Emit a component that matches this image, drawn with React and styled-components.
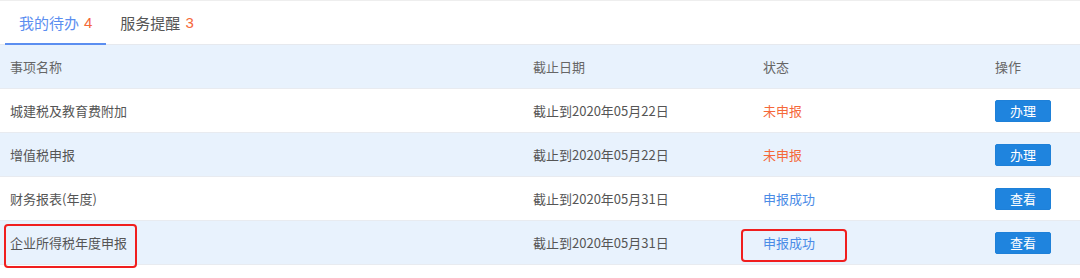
import React from 'react';
import styled, { createGlobalStyle } from 'styled-components';

const GlobalStyle = createGlobalStyle`
  body {
    margin: 0;
    background: #fff;
    font-family: "Noto Sans CJK SC", "Noto Sans", sans-serif;
  }
`;

const Panel = styled.div`
  width: 1080px;
  height: 278px;
  border-top: 1px solid #eeeeee;
  box-sizing: border-box;
  background: #fff;
`;

const Tabs = styled.div`
  display: flex;
  height: 43px;
  padding-left: 5px;
  border-bottom: 1px solid #e6e9ee;
`;

const Tab = styled.div`
  display: flex;
  align-items: center;
  gap: 5px;
  padding: 0 14px;
  font-size: 15px;
  color: ${(p) => (p.$active ? '#5b8ef0' : '#555')};
  border-bottom: 2px solid ${(p) => (p.$active ? '#5b8ef0' : 'transparent')};
  margin-bottom: -1px;
`;

const Count = styled.span`
  color: #f5683a;
  font-size: 15px;
  font-family: "Liberation Sans", Arial, sans-serif;
`;

const Row = styled.div`
  display: grid;
  grid-template-columns: 523px 230px 232px 1fr;
  align-items: center;
  height: 44px;
  padding-left: 10px;
  box-sizing: border-box;
  background: ${(p) => (p.$striped ? '#e8f2fd' : '#fff')};
  border-bottom: 1px solid #e8ebf0;
  font-size: 13px;
  color: ${(p) => (p.$head ? '#666' : '#555')};
`;

const Cell = styled.div`
  position: relative;
  white-space: nowrap;
  color: ${(p) => p.$color || 'inherit'};
`;

const Mark = styled.span`
  position: absolute;
  left: ${(p) => p.$left}px;
  right: ${(p) => p.$right}px;
  top: ${(p) => p.$top}px;
  bottom: ${(p) => p.$bottom}px;
  border: 2px solid #f01e1e;
  border-radius: 4px;
  pointer-events: none;
`;

const Button = styled.button`
  width: 56px;
  height: 22px;
  border: 1px solid #1e80d8;
  border-radius: 2px;
  background: #1f84de;
  color: #fff;
  font-family: inherit;
  font-size: 13px;
  padding: 0;
  cursor: pointer;
`;

const statusColor = {
  '未申报': '#f5683a',
  '申报成功': '#4a8be6',
};

const rows = [
  { name: '城建税及教育费附加', date: '截止到2020年05月22日', status: '未申报', action: '办理' },
  { name: '增值税申报', date: '截止到2020年05月22日', status: '未申报', action: '办理' },
  { name: '财务报表(年度)', date: '截止到2020年05月31日', status: '申报成功', action: '查看' },
  { name: '企业所得税年度申报', date: '截止到2020年05月31日', status: '申报成功', action: '查看', marked: true },
];

export default function App() {
  return (
    <>
      <GlobalStyle />
      <Panel>
        <Tabs>
          <Tab $active>
            我的待办 <Count>4</Count>
          </Tab>
          <Tab>
            服务提醒 <Count>3</Count>
          </Tab>
        </Tabs>
        <Row $head $striped>
          <Cell>事项名称</Cell>
          <Cell>截止日期</Cell>
          <Cell>状态</Cell>
          <Cell>操作</Cell>
        </Row>
        {rows.map((r, i) => (
          <Row key={r.name} $striped={i % 2 === 1}>
            <Cell>
              {r.name}
              {r.marked && <Mark $left={-6} $right={396} $top={-9} $bottom={-16} />}
            </Cell>
            <Cell>{r.date}</Cell>
            <Cell $color={statusColor[r.status]}>
              {r.status}
              {r.marked && <Mark $left={-22} $right={148} $top={-4} $bottom={-10} />}
            </Cell>
            <Cell>
              <Button>{r.action}</Button>
            </Cell>
          </Row>
        ))}
      </Panel>
    </>
  );
}
